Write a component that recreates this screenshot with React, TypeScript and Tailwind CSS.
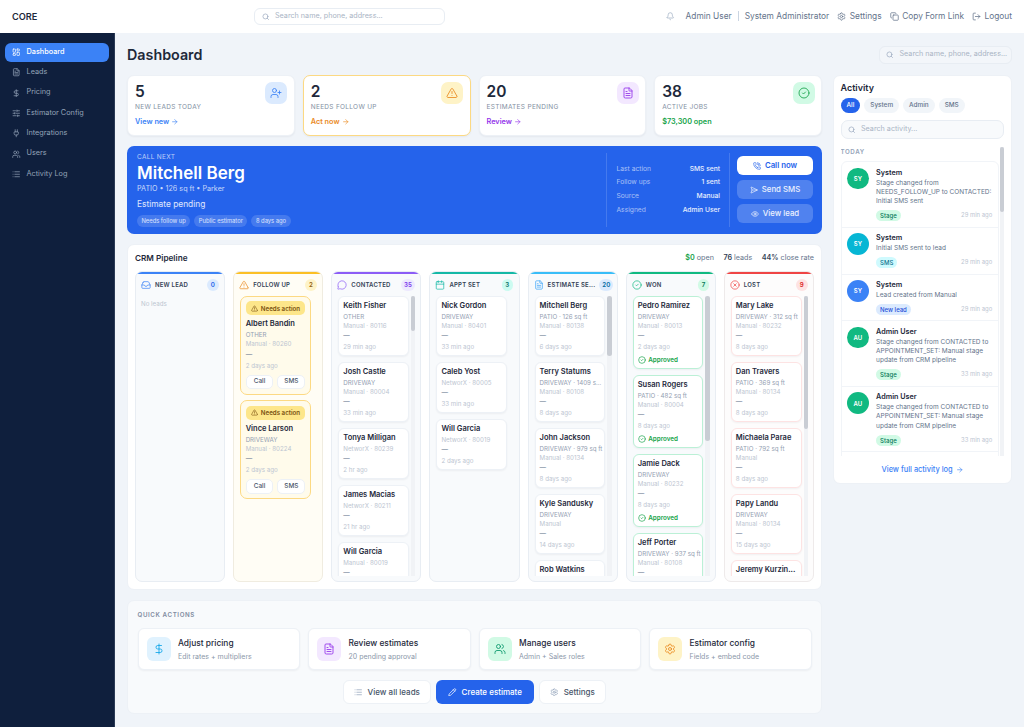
import {
  ArrowRight, Bell, Calendar, CircleCheck, CircleX, Copy, DollarSign, Eye, FileText, Inbox, LayoutDashboard,
  List, LogOut, MessageCircle, Pencil, PhoneCall, Plug, Search, SendHorizontal, Settings, SlidersHorizontal,
  TriangleAlert, UserPlus, Users,
} from 'lucide-react'
import type { ReactNode } from 'react'

const NAV = [
  { label: 'Dashboard', icon: LayoutDashboard, active: true },
  { label: 'Leads', icon: FileText },
  { label: 'Pricing', icon: DollarSign },
  { label: 'Estimator Config', icon: SlidersHorizontal },
  { label: 'Integrations', icon: Plug },
  { label: 'Users', icon: Users },
  { label: 'Activity Log', icon: List },
]

type Lead = { name: string; kind: string; src: string; time: string; approved?: boolean }

function SearchBox({ text, className }: { text: string; className: string }) {
  return (
    <div className={`flex items-center gap-[6px] border border-[#e8edf3] ${className}`}>
      <Search className="w-[7.5px] h-[7.5px] text-slate-400 shrink-0" />
      <span className="text-[7.2px] text-[#a9b4c4] whitespace-nowrap">{text}</span>
    </div>
  )
}

function Header() {
  const link = 'flex items-center gap-[3.5px]'
  return (
    <header className="h-[33px] bg-white flex items-center pl-3 pr-3 text-[8.35px] text-[#64748b]">
      <div className="w-[242px] text-[9.2px] font-semibold text-[#1e293b]">CORE</div>
      <SearchBox text="Search name, phone, address..." className="w-[191px] h-[17.5px] rounded-[6px] pl-[6.5px]" />
      <div className="ml-auto flex items-center">
        <Bell className="w-[8.5px] h-[8.5px] text-slate-400 mr-[11px]" strokeWidth={1.7} />
        <span>Admin User</span>
        <span className="w-px h-[10px] bg-slate-300 mx-[6px]" />
        <span>System Administrator</span>
        <span className={`${link} ml-[8px]`}><Settings className="w-[9px] h-[9px]" />Settings</span>
        <span className={`${link} ml-[8px]`}><Copy className="w-[9px] h-[9px]" />Copy Form Link</span>
        <span className={`${link} ml-[8px]`}><LogOut className="w-[9px] h-[9px]" />Logout</span>
      </div>
    </header>
  )
}

function Sidebar() {
  return (
    <aside className="w-[115px] shrink-0 bg-[#0f1f3d] border-r border-[#2b3a55] px-[5px] pt-[9.5px] flex flex-col gap-[1.4px]">
      {NAV.map(n => (
        <div
          key={n.label}
          className={`h-[19px] rounded-[6px] flex items-center gap-[6px] pl-[7px] text-[7.3px] ${n.active ? 'bg-[#3b82f6] text-white font-medium' : 'text-[#94a3b8]'}`}
        >
          <n.icon className="w-[8.5px] h-[8.5px] shrink-0" />
          {n.label}
        </div>
      ))}
    </aside>
  )
}

const STATS = [
  { num: '5', label: 'NEW LEADS TODAY', link: 'View new', arrow: true, color: 'text-[#3b82f6]', bg: 'bg-[#dbeafe]', icon: UserPlus },
  { num: '2', label: 'NEEDS FOLLOW UP', link: 'Act now', arrow: true, color: 'text-[#ea8a1f]', bg: 'bg-[#fef3c7]', icon: TriangleAlert, warn: true },
  { num: '20', label: 'ESTIMATES PENDING', link: 'Review', arrow: true, color: 'text-[#9333ea]', bg: 'bg-[#f3e8ff]', icon: FileText },
  { num: '38', label: 'ACTIVE JOBS', link: '$73,300 open', arrow: false, color: 'text-[#16a34a]', bg: 'bg-[#d1fae5]', icon: CircleCheck },
]

function StatCards() {
  return (
    <div className="grid grid-cols-4 gap-[8px]">
      {STATS.map(s => (
        <div
          key={s.label}
          className={`relative h-[61px] rounded-[7px] bg-white pl-[7px] pt-[7px] shadow-[0_1px_2px_rgba(15,23,42,0.05)] ${s.warn ? 'border-[1.3px] border-[#fcd983]' : 'border border-[#edf1f6]'}`}
        >
          <div className="text-[15.5px] leading-[18px] font-semibold text-[#1e293b]">{s.num}</div>
          <div className="mt-[2px] text-[6.5px] leading-[9px] tracking-[0.3px] text-[#64748b] opacity-80">{s.label}</div>
          <div className={`mt-[5px] flex items-center gap-[2px] text-[7.3px] leading-[10px] font-semibold ${s.color}`}>
            {s.link}
            {s.arrow && <ArrowRight className="w-[7.5px] h-[7.5px]" />}
          </div>
          <div className={`absolute right-[6.3px] top-[6.5px] w-[22px] h-[22px] rounded-[7px] flex items-center justify-center ${s.bg}`}>
            <s.icon className={`w-[12px] h-[12px] ${s.color}`} strokeWidth={1.7} />
          </div>
        </div>
      ))}
    </div>
  )
}

function HeroButton({ children, white }: { children: ReactNode; white?: boolean }) {
  return (
    <div className={`h-[19px] rounded-[6px] flex items-center justify-center gap-[4px] text-[7.8px] font-medium ${white ? 'bg-white text-[#2563eb] font-semibold' : 'bg-white/20 text-white/90'}`}>
      {children}
    </div>
  )
}

function Hero() {
  const rows = [['Last action', 'SMS sent'], ['Follow ups', '1 sent'], ['Source', 'Manual'], ['Assigned', 'Admin User']]
  return (
    <div className="h-[88px] rounded-[7px] bg-[#2563eb] text-white flex items-center pl-[10px] pr-[9px]">
      <div className="flex-1">
        <div className="text-[6.5px] leading-[9px] tracking-[0.3px] text-white/70">CALL NEXT</div>
        <div className="text-[17px] leading-[22px] font-semibold">Mitchell Berg</div>
        <div className="text-[7.2px] leading-[9px] text-white/75">PATIO • 126 sq ft • Parker</div>
        <div className="mt-[5.5px] text-[8.4px] leading-[12px] text-white/85">Estimate pending</div>
        <div className="mt-[4.5px] flex gap-[4px]">
          {['Needs follow up', 'Public estimator', '8 days ago'].map(t => (
            <span key={t} className="h-[12px] px-[4.5px] rounded-full bg-white/15 text-[5.8px] leading-[12px] text-white/80">{t}</span>
          ))}
        </div>
      </div>
      <div className="h-[74px] w-[123px] border-l border-white/15 pl-[9.5px] pr-[9px] flex flex-col justify-center gap-[4.6px]">
        {rows.map(r => (
          <div key={r[0]} className="flex justify-between text-[6.7px] leading-[9px]">
            <span className="text-white/60">{r[0]}</span>
            <span className="text-white/90 font-medium">{r[1]}</span>
          </div>
        ))}
      </div>
      <div className="h-[74px] w-[84px] border-l border-white/15 pl-[7px] flex flex-col justify-center gap-[5px]">
        <HeroButton white><PhoneCall className="w-[8px] h-[8px]" />Call now</HeroButton>
        <HeroButton><SendHorizontal className="w-[8px] h-[8px]" />Send SMS</HeroButton>
        <HeroButton><Eye className="w-[8px] h-[8px]" />View lead</HeroButton>
      </div>
    </div>
  )
}

function CardBody({ lead }: { lead: Lead }) {
  return (
    <>
      <div className="text-[7.5px] leading-[10px] font-semibold text-[#1e293b] whitespace-nowrap">{lead.name}</div>
      <div className="mt-[1px] text-[6.2px] leading-[9px] text-[#94a0b2] whitespace-nowrap">{lead.kind}</div>
      <div className="text-[6.2px] leading-[9px] text-[#bcc5d1] whitespace-nowrap">{lead.src}</div>
      <div className="mt-[1.5px] text-[6.5px] leading-[11px] text-[#64748b]">—</div>
      <div className="text-[6.2px] leading-[10px] text-[#bcc5d1]">{lead.time}</div>
    </>
  )
}

function LeadCard({ lead, border = 'border-[#edf1f6]' }: { lead: Lead; border?: string }) {
  return (
    <div className={`shrink-0 rounded-[6px] border bg-white px-[4px] pt-[4px] pb-[3px] shadow-[0_1px_2px_rgba(15,23,42,0.05)] ${border}`}>
      <CardBody lead={lead} />
      {lead.approved && (
        <div className="mt-[2.5px] mb-[0.5px] flex items-center gap-[2.5px] text-[6.3px] leading-[10px] font-semibold text-[#16a34a]">
          <CircleCheck className="w-[8px] h-[8px]" />Approved
        </div>
      )}
    </div>
  )
}

function FollowUpCard({ lead }: { lead: Lead }) {
  return (
    <div className="shrink-0 rounded-[7px] border border-[#fcd983] bg-[#fffbeb] px-[4.5px] pt-[4.5px] pb-[4.5px]">
      <div className="h-[14px] rounded-[5px] bg-[#fde68a] flex items-center justify-center gap-[3px] text-[6.2px] font-semibold text-[#78500f]">
        <TriangleAlert className="w-[7px] h-[7px]" />Needs action
      </div>
      <div className="mt-[4px]"><CardBody lead={lead} /></div>
      <div className="mt-[4px] flex gap-[4px]">
        {['Call', 'SMS'].map(t => (
          <span key={t} className="flex-1 h-[14.5px] rounded-[5px] bg-white border border-[#edf1f6] flex items-center justify-center text-[6.4px] font-medium text-[#475569]">{t}</span>
        ))}
      </div>
    </div>
  )
}

type Column = {
  title: string
  count: string
  icon: typeof Inbox
  top: string
  text: string
  pill: string
  bg: string
  border: string
  leads: Lead[]
  cardBorder?: string
  thumb?: string
}

const COLUMNS: Column[] = [
  { title: 'NEW LEAD', count: '0', icon: Inbox, top: 'bg-[#3b82f6]', text: 'text-[#3b82f6]', pill: 'bg-[#dbeafe] text-[#2563eb]', bg: 'bg-[#f8fafc]', border: 'border-[#e8edf3]', leads: [] },
  {
    title: 'FOLLOW UP', count: '2', icon: TriangleAlert, top: 'bg-[#fbbf24]', text: 'text-[#ea8a1f]', pill: 'bg-[#fef3c7] text-[#92600e]', bg: 'bg-[#fffdf5]', border: 'border-[#f0ece0]',
    leads: [
      { name: 'Albert Bandin', kind: 'OTHER', src: 'Manual · 80260', time: '2 days ago' },
      { name: 'Vince Larson', kind: 'DRIVEWAY', src: 'Manual · 80224', time: '2 days ago' },
    ],
  },
  {
    title: 'CONTACTED', count: '35', icon: MessageCircle, top: 'bg-[#8b5cf6]', text: 'text-[#8b5cf6]', pill: 'bg-[#ede9fe] text-[#7c3aed]', bg: 'bg-[#f8fafc]', border: 'border-[#e8edf3]', thumb: 'h-[35px]',
    leads: [
      { name: 'Keith Fisher', kind: 'OTHER', src: 'Manual · 80116', time: '29 min ago' },
      { name: 'Josh Castle', kind: 'DRIVEWAY', src: 'Manual · 80004', time: '33 min ago' },
      { name: 'Tonya Milligan', kind: '', src: 'NetworX · 80239', time: '2 hr ago' },
      { name: 'James Macias', kind: '', src: 'NetworX · 80211', time: '21 hr ago' },
      { name: 'Will Garcia', kind: '', src: 'Manual · 80019', time: '' },
    ],
  },
  {
    title: 'APPT SET', count: '3', icon: Calendar, top: 'bg-[#14b8a6]', text: 'text-[#14b8a6]', pill: 'bg-[#ccfbf1] text-[#0f766e]', bg: 'bg-[#f8fafc]', border: 'border-[#e8edf3]',
    leads: [
      { name: 'Nick Gordon', kind: 'DRIVEWAY', src: 'Manual · 80401', time: '33 min ago' },
      { name: 'Caleb Yost', kind: '', src: 'NetworX · 80005', time: '33 min ago' },
      { name: 'Will Garcia', kind: '', src: 'NetworX · 80019', time: '2 days ago' },
    ],
  },
  {
    title: 'ESTIMATE SE...', count: '20', icon: FileText, top: 'bg-[#38bdf8]', text: 'text-[#38a3f8]', pill: 'bg-[#dbeafe] text-[#0369a1]', bg: 'bg-[#f8fafc]', border: 'border-[#e8edf3]', thumb: 'h-[60px]',
    leads: [
      { name: 'Mitchell Berg', kind: 'PATIO · 126 sq ft', src: 'Manual · 80138', time: '6 days ago' },
      { name: 'Terry Statums', kind: 'DRIVEWAY · 1409 s...', src: 'Manual · 80108', time: '8 days ago' },
      { name: 'John Jackson', kind: 'DRIVEWAY · 979 sq ft', src: 'Manual · 80134', time: '8 days ago' },
      { name: 'Kyle Sandusky', kind: 'DRIVEWAY', src: 'Manual', time: '14 days ago' },
      { name: 'Rob Watkins', kind: '', src: '', time: '' },
    ],
  },
  {
    title: 'WON', count: '7', icon: CircleCheck, top: 'bg-[#10b981]', text: 'text-[#10b981]', pill: 'bg-[#d1fae5] text-[#047857]', bg: 'bg-[#f8fafc]', border: 'border-[#e8edf3]', cardBorder: 'border-[#bbf0d6]', thumb: 'h-[145px]',
    leads: [
      { name: 'Pedro Ramirez', kind: 'DRIVEWAY', src: 'Manual · 80013', time: '2 days ago', approved: true },
      { name: 'Susan Rogers', kind: 'PATIO · 482 sq ft', src: 'Manual · 80004', time: '8 days ago', approved: true },
      { name: 'Jamie Dack', kind: 'DRIVEWAY', src: 'Manual · 80232', time: '8 days ago', approved: true },
      { name: 'Jeff Porter', kind: 'DRIVEWAY · 937 sq ft', src: 'Manual · 80108', time: '' },
    ],
  },
  {
    title: 'LOST', count: '9', icon: CircleX, top: 'bg-[#ef4444]', text: 'text-[#ef4444]', pill: 'bg-[#fee2e2] text-[#dc2626]', bg: 'bg-[#fdfcfc]', border: 'border-[#eeeaea]', cardBorder: 'border-[#fde3e3]', thumb: 'h-[133px]',
    leads: [
      { name: 'Mary Lake', kind: 'DRIVEWAY · 312 sq ft', src: 'Manual · 80232', time: '8 days ago' },
      { name: 'Dan Travers', kind: 'PATIO · 369 sq ft', src: 'Manual · 80134', time: '8 days ago' },
      { name: 'Michaela Parae', kind: 'PATIO · 792 sq ft', src: 'Manual', time: '8 days ago' },
      { name: 'Papy Landu', kind: 'DRIVEWAY', src: 'Manual · 80134', time: '15 days ago' },
      { name: 'Jeremy Kurzin...', kind: '', src: '', time: '' },
    ],
  },
]

function PipelineColumn({ col }: { col: Column }) {
  const Icon = col.icon
  return (
    <div className={`relative h-[311px] rounded-[7px] border overflow-hidden flex flex-col ${col.bg} ${col.border}`}>
      <div className={`h-[2.5px] shrink-0 ${col.top}`} />
      <div className="h-[21.5px] shrink-0 flex items-center pl-[5px] pr-[5.5px] gap-[4px]">
        <Icon className={`w-[10px] h-[10px] shrink-0 ${col.text}`} strokeWidth={1.7} />
        <span className="flex-1 text-[6px] font-semibold tracking-[0.2px] text-[#334155] whitespace-nowrap">{col.title}</span>
        <span className={`shrink-0 min-w-[11.5px] px-[3px] h-[11.5px] rounded-full flex items-center justify-center text-[6.2px] font-semibold ${col.pill}`}>{col.count}</span>
      </div>
      {col.leads.length === 0 && <div className="pl-[5px] pt-[3px] text-[6.2px] text-[#bcc5d1]">No leads</div>}
      <div className="flex-1 min-h-0 mb-[5px] overflow-hidden flex flex-col gap-[5.5px] pl-[6px] pr-[11.5px]">
        {col.leads.map(l => (
          col.title === 'FOLLOW UP'
            ? <FollowUpCard key={l.name} lead={l} />
            : <LeadCard key={l.name} lead={l} border={col.cardBorder} />
        ))}
      </div>
      {col.thumb && (
        <div className="absolute right-[5px] top-[24px] bottom-[5px] w-[4.5px] bg-[#f1f3f6]">
          <div className={`w-[4.5px] rounded-full bg-[#c9cdd4] ${col.thumb}`} />
        </div>
      )}
    </div>
  )
}

function Pipeline() {
  return (
    <div className="h-[346.5px] rounded-[7px] bg-white border border-[#edf1f6] px-[7px] pt-[4px]">
      <div className="h-[19px] flex items-center justify-between">
        <span className="text-[8.2px] font-semibold text-[#1e293b]">CRM Pipeline</span>
        <div className="flex gap-[9.5px] text-[7.2px] text-[#64748b]">
          <span><b className="font-semibold text-[#16a34a]">$0</b> open</span>
          <span><b className="font-semibold text-[#334155]">76</b> leads</span>
          <span><b className="font-semibold text-[#334155]">44%</b> close rate</span>
        </div>
      </div>
      <div className="mt-[3px] grid grid-cols-7 gap-[8px]">
        {COLUMNS.map(c => <PipelineColumn key={c.title} col={c} />)}
      </div>
    </div>
  )
}

const QUICK = [
  { title: 'Adjust pricing', sub: 'Edit rates + multipliers', icon: DollarSign, bg: 'bg-[#e0f2fe]', color: 'text-[#0ea5e9]' },
  { title: 'Review estimates', sub: '20 pending approval', icon: FileText, bg: 'bg-[#f3e8ff]', color: 'text-[#9333ea]' },
  { title: 'Manage users', sub: 'Admin + Sales roles', icon: Users, bg: 'bg-[#d1fae5]', color: 'text-[#059669]' },
  { title: 'Estimator config', sub: 'Fields + embed code', icon: Settings, bg: 'bg-[#fef3c7]', color: 'text-[#ea8a1f]' },
]

function QuickActions() {
  const btn = 'h-[24px] rounded-[6px] flex items-center gap-[5px] text-[8px] font-medium'
  return (
    <div className="h-[113.5px] rounded-[7px] bg-[#f8fafc] border border-[#edf1f6] px-[9.5px] pt-[9px]">
      <div className="text-[6.2px] leading-[9px] font-semibold tracking-[0.6px] text-[#7f8ba0]">QUICK ACTIONS</div>
      <div className="mt-[8.5px] grid grid-cols-4 gap-[8px]">
        {QUICK.map(q => (
          <div key={q.title} className="h-[42px] rounded-[6px] bg-white border border-[#edf1f6] flex items-center pl-[8px] gap-[7.5px] shadow-[0_1px_2px_rgba(15,23,42,0.05)]">
            <div className={`w-[24px] h-[24px] rounded-[6px] flex items-center justify-center ${q.bg}`}>
              <q.icon className={`w-[12px] h-[12px] ${q.color}`} strokeWidth={1.7} />
            </div>
            <div className="pt-[1px]">
              <div className="text-[8.4px] leading-[11px] font-medium text-[#1e293b]">{q.title}</div>
              <div className="mt-[3px] text-[7px] leading-[9px] text-[#8b97a9]">{q.sub}</div>
            </div>
          </div>
        ))}
      </div>
      <div className="mt-[10.5px] flex justify-center gap-[5px]">
        <div className={`${btn} w-[88px] bg-white border border-[#edf1f6] text-[#475569] justify-center`}><List className="w-[8.5px] h-[8.5px] text-slate-400" />View all leads</div>
        <div className={`${btn} w-[98px] bg-[#2563eb] text-white justify-center`}><Pencil className="w-[8.5px] h-[8.5px]" />Create estimate</div>
        <div className={`${btn} w-[67px] bg-white border border-[#edf1f6] text-[#475569] justify-center`}><Settings className="w-[8.5px] h-[8.5px] text-slate-400" />Settings</div>
      </div>
    </div>
  )
}

const FEED = [
  { who: 'System', init: 'SY', avatar: 'bg-[#10b981]', msg: ['Stage changed from', 'NEEDS_FOLLOW_UP to CONTACTED:', 'Initial SMS sent'], tag: 'Stage', tagCls: 'bg-[#d1fae5] text-[#047857]', time: '29 min ago' },
  { who: 'System', init: 'SY', avatar: 'bg-[#06b6d4]', msg: ['Initial SMS sent to lead'], tag: 'SMS', tagCls: 'bg-[#cffafe] text-[#0e7490]', time: '29 min ago' },
  { who: 'System', init: 'SY', avatar: 'bg-[#3b82f6]', msg: ['Lead created from Manual'], tag: 'New lead', tagCls: 'bg-[#dbeafe] text-[#1d4ed8]', time: '29 min ago' },
  { who: 'Admin User', init: 'AU', avatar: 'bg-[#10b981]', msg: ['Stage changed from CONTACTED to', 'APPOINTMENT_SET: Manual stage', 'update from CRM pipeline'], tag: 'Stage', tagCls: 'bg-[#d1fae5] text-[#047857]', time: '33 min ago' },
  { who: 'Admin User', init: 'AU', avatar: 'bg-[#10b981]', msg: ['Stage changed from CONTACTED to', 'APPOINTMENT_SET: Manual stage', 'update from CRM pipeline'], tag: 'Stage', tagCls: 'bg-[#d1fae5] text-[#047857]', time: '33 min ago' },
]

function Activity() {
  return (
    <div className="h-[409.3px] rounded-[7px] bg-white border border-[#edf1f6] px-[6.5px] pt-[6.5px] flex flex-col">
      <div className="text-[9px] leading-[12px] font-semibold text-[#1e293b]">Activity</div>
      <div className="mt-[4px] flex gap-[4px]">
        {['All', 'System', 'Admin', 'SMS'].map((p, i) => (
          <span key={p} className={`h-[14.5px] px-[6px] rounded-full flex items-center text-[6.4px] font-medium ${i === 0 ? 'bg-[#2563eb] text-white' : 'bg-[#f1f5f9] text-[#64748b]'}`}>{p}</span>
        ))}
      </div>
      <SearchBox text="Search activity..." className="mt-[7px] h-[19.5px] rounded-[7px] pl-[6px] bg-[#f8fafc]" />
      <div className="relative mt-[7.5px] flex-1 min-h-0 overflow-hidden">
        <div className="text-[6.2px] leading-[9px] font-semibold tracking-[0.6px] text-[#94a3b8]">TODAY</div>
        <div className="mt-[5.7px] mr-[5.5px] rounded-t-[6px] border border-[#f1f4f8] h-[320px] overflow-hidden">
          {FEED.map((f, i) => (
            <div key={i} className="flex gap-[7.4px] pl-[5.7px] pr-[5.5px] pt-[5.5px] pb-[5.5px] border-b border-[#f1f4f8]">
              <div className={`w-[21.5px] h-[21.5px] shrink-0 rounded-full flex items-center justify-center text-[6px] font-semibold text-white ${f.avatar}`}>{f.init}</div>
              <div className="flex-1 min-w-0">
                <div className="text-[7.2px] leading-[10px] font-semibold text-[#1e293b]">{f.who}</div>
                <div className="mt-[1px] text-[6.5px] leading-[9.2px] text-[#64748b] whitespace-nowrap">
                  {f.msg.map(m => <div key={m}>{m}</div>)}
                </div>
                <div className="mt-[3.7px] flex items-center justify-between">
                  <span className={`h-[11px] px-[4px] rounded-full flex items-center text-[6px] font-medium ${f.tagCls}`}>{f.tag}</span>
                  <span className="text-[5.9px] text-[#bcc5d1]">{f.time}</span>
                </div>
              </div>
            </div>
          ))}
        </div>
        <div className="absolute right-0 top-0 bottom-0 w-[4.5px] bg-[#f1f3f6]">
          <div className="h-[65px] w-[4.5px] rounded-full bg-[#c9cdd4]" />
        </div>
      </div>
      <div className="h-[27px] shrink-0 flex items-center justify-center gap-[3px] text-[7.4px] font-medium text-[#3b82f6]">
        View full activity log<ArrowRight className="w-[7.5px] h-[7.5px]" />
      </div>
    </div>
  )
}

export default function App() {
  return (
    <div className="h-[727px] overflow-hidden flex flex-col bg-[#f0f4f9]" style={{ fontFamily: 'Inter, "Noto Sans", sans-serif' }}>
      <Header />
      <div className="flex-1 min-h-0 flex">
        <Sidebar />
        <main className="flex-1 min-w-0 pl-[12px]">
          <div className="h-[41.7px] w-[885px] flex items-center justify-between pt-[2px]">
            <h1 className="text-[14.3px] font-semibold text-[#1e293b]">Dashboard</h1>
            <SearchBox text="Search name, phone, address..." className="w-[133px] h-[18px] rounded-[6px] pl-[6px] bg-[#f3f6fa]" />
          </div>
          <div className="flex gap-[11px] items-start">
            <div className="w-[695px] shrink-0 flex flex-col gap-[10px]">
              <StatCards />
              <Hero />
              <Pipeline />
              <QuickActions />
            </div>
            <div className="w-[178.7px] shrink-0"><Activity /></div>
          </div>
        </main>
      </div>
    </div>
  )
}
